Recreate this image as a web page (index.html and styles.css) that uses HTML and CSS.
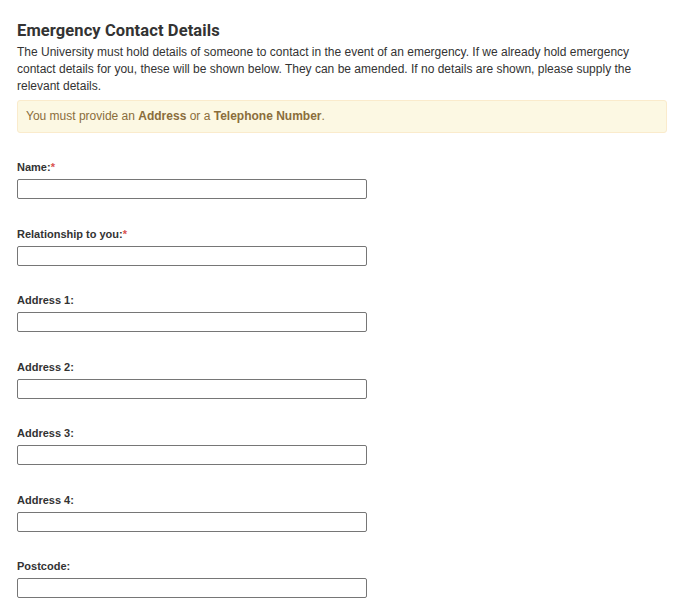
FILE: index.html
```html
<!DOCTYPE html>
<html lang="en">
<head>
<meta charset="utf-8">
<title>Emergency Contact Details</title>
<link rel="stylesheet" href="styles.css">
</head>
<body>
<div class="page">
  <h1 class="title">Emergency Contact Details</h1>
  <p class="intro">The University must hold details of someone to contact in the event of an emergency. If we already hold emergency contact details for you, these will be shown below. They can be amended. If no details are shown, please supply the relevant details.</p>
  <div class="alert">You must provide an <strong>Address</strong> or a <strong>Telephone Number</strong>.</div>
  <form class="form">
    <div class="field">
      <label class="label" for="name">Name:<span class="req">*</span></label>
      <input class="input" id="name" type="text">
    </div>
    <div class="field">
      <label class="label" for="rel">Relationship to you:<span class="req">*</span></label>
      <input class="input" id="rel" type="text">
    </div>
    <div class="field">
      <label class="label" for="a1">Address 1:</label>
      <input class="input" id="a1" type="text">
    </div>
    <div class="field">
      <label class="label" for="a2">Address 2:</label>
      <input class="input" id="a2" type="text">
    </div>
    <div class="field">
      <label class="label" for="a3">Address 3:</label>
      <input class="input" id="a3" type="text">
    </div>
    <div class="field">
      <label class="label" for="a4">Address 4:</label>
      <input class="input" id="a4" type="text">
    </div>
    <div class="field">
      <label class="label" for="pc">Postcode:</label>
      <input class="input" id="pc" type="text">
    </div>
  </form>
</div>
</body>
</html>
```

FILE: styles.css
```css
html, body {
  margin: 0;
  padding: 0;
  background: #fff;
}
body {
  font-family: "Liberation Sans", Arial, sans-serif;
  font-size: 12px;
  line-height: 17px;
  color: #333;
}
.page {
  padding: 21px 8px 0 17px;
}
.title {
  margin: 0 0 3px;
  font-family: Roboto, "Liberation Sans", sans-serif;
  font-size: 16.5px;
  line-height: 20px;
  font-weight: bold;
  letter-spacing: 0.1px;
  color: #333;
}
.intro {
  margin: 0 0 5px;
}
.alert {
  padding: 7px 8px;
  background: #fcf8e3;
  border: 1px solid #faebcc;
  border-radius: 3px;
  color: #8a6d3b;
  margin-bottom: 27px;
}
.alert strong {
  font-weight: bold;
}
.form {
  display: flex;
  flex-direction: column;
  gap: 27.5px;
}
.field {
  display: flex;
  flex-direction: column;
  align-items: flex-start;
  gap: 4px;
}
.label {
  font-size: 11px;
  line-height: 15px;
  font-weight: bold;
  color: #333;
}
.req {
  color: #d9534f;
}
.input {
  box-sizing: border-box;
  width: 350px;
  height: 20px;
  margin: 0;
  padding: 1px 4px;
  border: 1px solid #767676;
  border-radius: 2px;
  background: #fff;
  font: 12px "Liberation Sans", Arial, sans-serif;
}
```
